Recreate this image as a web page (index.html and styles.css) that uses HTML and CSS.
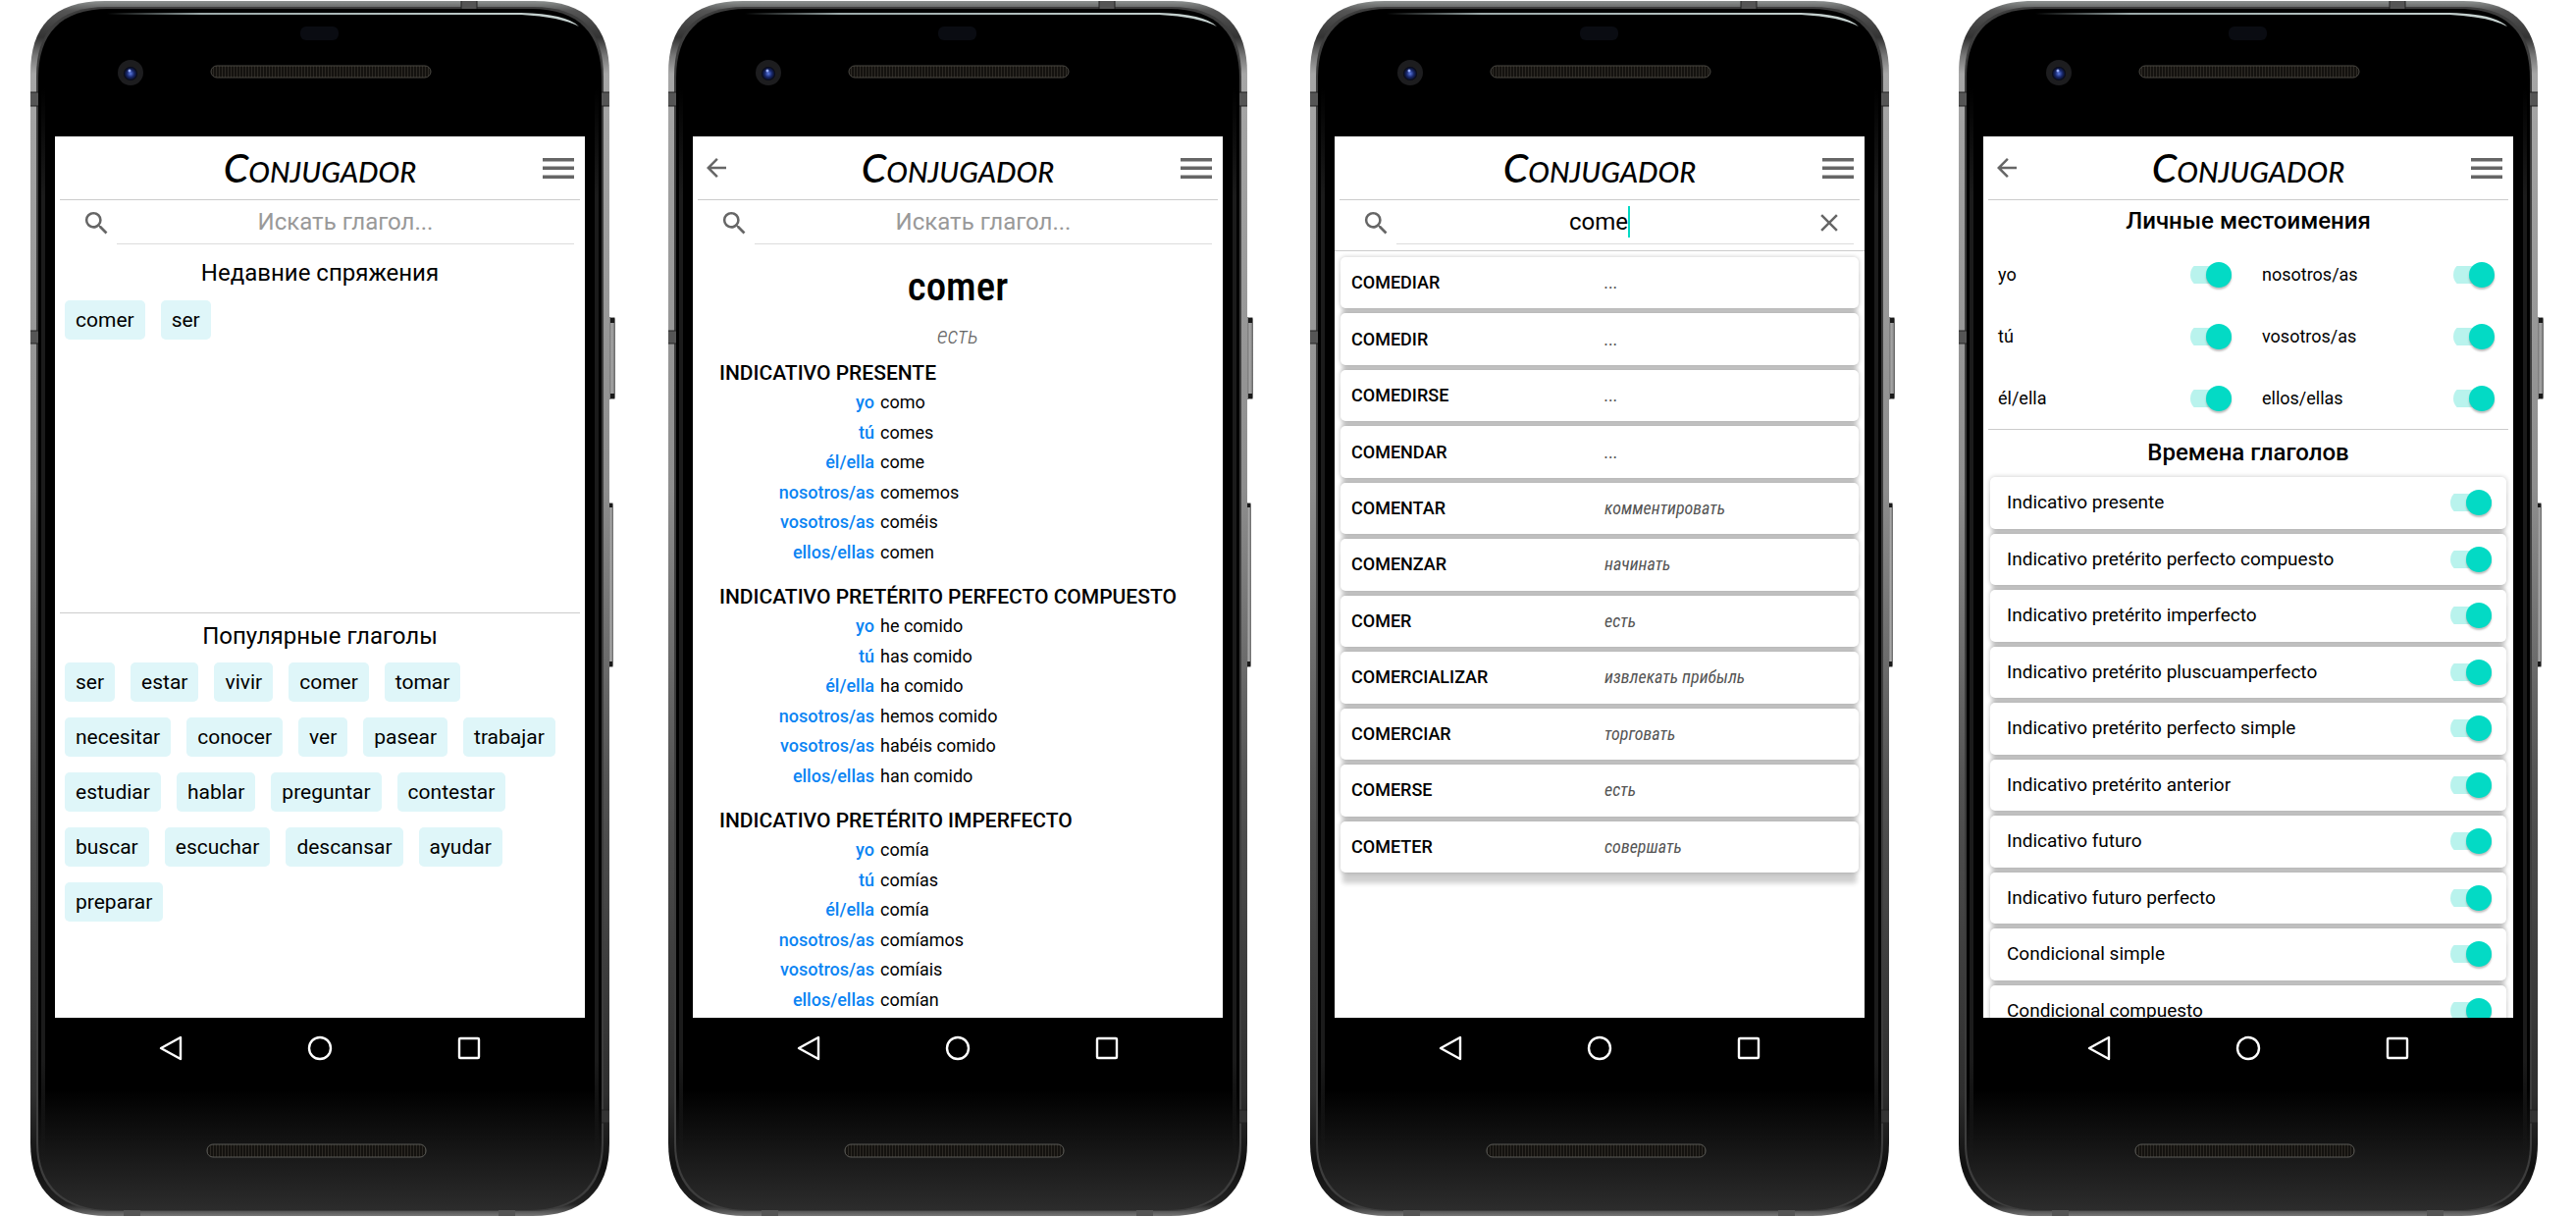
FILE: index.html
```html
<!DOCTYPE html>
<html lang="ru">
<head>
<meta charset="utf-8">
<meta name="viewport" content="width=device-width, initial-scale=1">
<title>Conjugador</title>
<link rel="stylesheet" href="styles.css">
</head>
<body>
<svg class="sprite" aria-hidden="true">
  <defs>
    <linearGradient id="metal" x1="0" y1="0" x2="0" y2="1">
      <stop offset="0" stop-color="#8d9190"/><stop offset=".008" stop-color="#555"/><stop offset=".03" stop-color="#333"/><stop offset=".045" stop-color="#777"/><stop offset=".06" stop-color="#a6a6a6"/>
      <stop offset=".4" stop-color="#8e8e8e"/><stop offset=".65" stop-color="#525252"/><stop offset=".9" stop-color="#2e2e2e"/><stop offset=".96" stop-color="#101010"/><stop offset=".99" stop-color="#222"/><stop offset="1" stop-color="#777"/>
    </linearGradient>
    <linearGradient id="glass" x1="0" y1="0" x2="0" y2="1">
      <stop offset="0" stop-color="#000"/><stop offset=".9" stop-color="#000"/><stop offset="1" stop-color="#2c2c2c"/>
    </linearGradient>
    <linearGradient id="edge" x1="0" y1="90" x2="0" y2="1190" gradientUnits="userSpaceOnUse">
      <stop offset="0" stop-color="#1b1b1b" stop-opacity="0"/><stop offset=".1" stop-color="#1b1b1b"/><stop offset=".9" stop-color="#1b1b1b"/><stop offset="1" stop-color="#1b1b1b" stop-opacity="0"/>
    </linearGradient>
    <linearGradient id="shine" x1="0" y1="0" x2="1" y2="0">
      <stop offset="0" stop-color="#9aa8a8" stop-opacity="0"/><stop offset=".2" stop-color="#9aa8a8"/><stop offset="1" stop-color="#c8d4d2"/>
    </linearGradient>
    <linearGradient id="key" x1="0" y1="0" x2="1" y2="0">
      <stop offset="0" stop-color="#555"/><stop offset=".6" stop-color="#a8a8a8"/><stop offset="1" stop-color="#666"/>
    </linearGradient>
    <pattern id="mesh" width="3" height="3" patternUnits="userSpaceOnUse">
      <rect width="3" height="3" fill="#14120f"/><rect width="1" height="3" fill="#2c2924"/>
    </pattern>
    <radialGradient id="lens"><stop offset="0" stop-color="#5a78e0"/><stop offset=".5" stop-color="#1a2a70"/><stop offset="1" stop-color="#05060f"/></radialGradient>
  </defs>
  <symbol id="frame" viewBox="0 0 600 1240">
    <rect x="588" y="323" width="8" height="84" rx="2" fill="url(#key)"/>
    <rect x="588" y="512" width="6" height="168" rx="2" fill="url(#key)"/>
    <path d="M591 324h4v5h-4zM591 401h4v5h-4zM590 513h3v4h-3zM590 674h3v5h-3z" fill="#1a1a1a"/>
    <path d="M0 75C0 28 22 1 76 1H514C567 1 590 28 590 75V1165C590 1215 560 1239 512 1239H78C30 1239 0 1215 0 1165Z" fill="url(#metal)"/>
    <path d="M6 78C6 32 28 7 78 7H512C562 7 584 32 584 78V1165C584 1211 556 1234 510 1234H80C34 1234 6 1211 6 1165Z" fill="#3d3d3d"/>
    <path d="M8 80C8 35 30 9 80 9H510C560 9 582 35 582 80V1165C582 1209 554 1233 508 1233H82C36 1233 8 1209 8 1165Z" fill="url(#glass)"/>
    <path d="M11 90h4v1100h-4zM575 90h4v1100h-4z" fill="url(#edge)"/>
    <path d="M0 94h8v14H0zM0 337h8v13H0zM582 94h8v14h-8zM439 1h16v8h-16zM95 1233h17v6H95zM477 1233h17v6h-17z" fill="#555"/>
    <path d="M582 1131h8v13h-8z" fill="#333"/>
    <path d="M0 94h8M0 108h8M0 337h8M0 350h8M582 94h8M582 108h8M582 1131h8M582 1144h8M439 1v8M455 1v8" stroke="#222" fill="none"/>
    <path d="M78 13H500Q546 14 559 27Q540 17 500 15H78Z" fill="url(#shine)"/>
    <rect x="275" y="27" width="39" height="14" rx="6" fill="#0a0c12"/>
    <circle cx="102" cy="74" r="13" fill="#1d1d1f"/><circle cx="102" cy="75" r="7" fill="url(#lens)"/><circle cx="101" cy="72" r="1.5" fill="#9bb0ff"/>
    <rect x="184" y="67" width="224" height="12" rx="6" fill="url(#mesh)" stroke="#4a4843"/>
    <rect x="180" y="1166" width="223" height="13" rx="6" fill="url(#mesh)" stroke="#5a5a56"/>
  </symbol>
  <symbol id="search" viewBox="0 0 24 24"><path fill="#666" d="M15.5 14h-.79l-.28-.27A6.471 6.471 0 0 0 16 9.5 6.5 6.5 0 1 0 9.5 16c1.61 0 3.09-.59 4.23-1.57l.27.28v.79l5 4.99L20.49 19l-4.99-5zm-6 0C7.01 14 5 11.99 5 9.5S7.01 5 9.5 5 14 7.01 14 9.5 11.99 14 9.5 14z"/></symbol>
  <symbol id="back" viewBox="0 0 24 24"><path fill="#666" d="M20 11H7.83l5.59-5.59L12 4l-8 8 8 8 1.41-1.41L7.83 13H20v-2z"/></symbol>
  <symbol id="clear" viewBox="0 0 24 24"><path fill="#666" d="M19 6.41L17.59 5 12 10.59 6.41 5 5 6.41 10.59 12 5 17.59 6.41 19 12 13.41 17.59 19 19 17.59 13.41 12z"/></symbol>
  <symbol id="menu" viewBox="0 0 32 24"><path fill="#666" d="M0 2h32v3.500H0zM0 10.500h32v3.500H0zM0 19.500h32v3.500H0z"/></symbol>
  <symbol id="nav-back" viewBox="0 0 24 26"><path d="M22 2V24L2 13Z" fill="none" stroke="#fff" stroke-width="2.4" stroke-linejoin="round"/></symbol>
  <symbol id="nav-home" viewBox="0 0 26 26"><circle cx="13" cy="13" r="11" fill="none" stroke="#fff" stroke-width="2.4"/></symbol>
  <symbol id="nav-recent" viewBox="0 0 26 26"><rect x="3" y="3" width="20" height="20" rx="1" fill="none" stroke="#fff" stroke-width="2.4"/></symbol>
</svg>

<main class="gallery">

<section class="phone">
  <svg class="frame" aria-hidden="true"><use href="#frame"/></svg>
  <div class="screen">
    <header class="bar">
      <h1 class="logo">Conjugador</h1>
      <button class="icon-btn menu" aria-label="Меню"><svg><use href="#menu"/></svg></button>
    </header>
    <div class="search">
      <svg class="glass"><use href="#search"/></svg>
      <div class="field"><input class="query" type="text" placeholder="Искать глагол..." aria-label="Искать глагол"></div>
    </div>
    <section class="recent">
      <h2 class="heading">Недавние спряжения</h2>
      <div class="chips"><button class="chip">comer</button><button class="chip">ser</button></div>
    </section>
    <section class="popular">
      <h2 class="heading">Популярные глаголы</h2>
      <div class="chips">
        <button class="chip">ser</button><button class="chip">estar</button><button class="chip">vivir</button><button class="chip">comer</button><button class="chip">tomar</button><button class="chip">necesitar</button><button class="chip">conocer</button><button class="chip">ver</button><button class="chip">pasear</button><button class="chip">trabajar</button><button class="chip">estudiar</button><button class="chip">hablar</button><button class="chip">preguntar</button><button class="chip">contestar</button><button class="chip">buscar</button><button class="chip">escuchar</button><button class="chip">descansar</button><button class="chip">ayudar</button><button class="chip">preparar</button>
      </div>
    </section>
  </div>
  <nav class="keys"><button aria-label="Назад"><svg><use href="#nav-back"/></svg></button><button aria-label="Домой"><svg><use href="#nav-home"/></svg></button><button aria-label="Обзор"><svg><use href="#nav-recent"/></svg></button></nav>
</section>

<section class="phone">
  <svg class="frame" aria-hidden="true"><use href="#frame"/></svg>
  <div class="screen">
    <header class="bar">
      <button class="icon-btn back" aria-label="Назад"><svg><use href="#back"/></svg></button>
      <h1 class="logo">Conjugador</h1>
      <button class="icon-btn menu" aria-label="Меню"><svg><use href="#menu"/></svg></button>
    </header>
    <div class="search">
      <svg class="glass"><use href="#search"/></svg>
      <div class="field"><input class="query" type="text" placeholder="Искать глагол..." aria-label="Искать глагол"></div>
    </div>
    <article class="verb">
      <h2 class="verb-name">comer</h2>
      <p class="verb-meaning">есть</p>
      <h3 class="tense">INDICATIVO PRESENTE</h3>
      <table class="forms">
        <tr><th>yo</th><td>como</td></tr>
        <tr><th>tú</th><td>comes</td></tr>
        <tr><th>él/ella</th><td>come</td></tr>
        <tr><th>nosotros/as</th><td>comemos</td></tr>
        <tr><th>vosotros/as</th><td>coméis</td></tr>
        <tr><th>ellos/ellas</th><td>comen</td></tr>
      </table>
      <h3 class="tense">INDICATIVO PRETÉRITO PERFECTO COMPUESTO</h3>
      <table class="forms">
        <tr><th>yo</th><td>he comido</td></tr>
        <tr><th>tú</th><td>has comido</td></tr>
        <tr><th>él/ella</th><td>ha comido</td></tr>
        <tr><th>nosotros/as</th><td>hemos comido</td></tr>
        <tr><th>vosotros/as</th><td>habéis comido</td></tr>
        <tr><th>ellos/ellas</th><td>han comido</td></tr>
      </table>
      <h3 class="tense">INDICATIVO PRETÉRITO IMPERFECTO</h3>
      <table class="forms">
        <tr><th>yo</th><td>comía</td></tr>
        <tr><th>tú</th><td>comías</td></tr>
        <tr><th>él/ella</th><td>comía</td></tr>
        <tr><th>nosotros/as</th><td>comíamos</td></tr>
        <tr><th>vosotros/as</th><td>comíais</td></tr>
        <tr><th>ellos/ellas</th><td>comían</td></tr>
      </table>
    </article>
  </div>
  <nav class="keys"><button aria-label="Назад"><svg><use href="#nav-back"/></svg></button><button aria-label="Домой"><svg><use href="#nav-home"/></svg></button><button aria-label="Обзор"><svg><use href="#nav-recent"/></svg></button></nav>
</section>

<section class="phone">
  <svg class="frame" aria-hidden="true"><use href="#frame"/></svg>
  <div class="screen">
    <header class="bar">
      <h1 class="logo">Conjugador</h1>
      <button class="icon-btn menu" aria-label="Меню"><svg><use href="#menu"/></svg></button>
    </header>
    <div class="search">
      <svg class="glass"><use href="#search"/></svg>
      <div class="field">
        <div class="typed"><input class="query" type="text" value="come" aria-label="Искать глагол"><span class="caret"></span></div>
        <button class="icon-btn clear" aria-label="Очистить"><svg><use href="#clear"/></svg></button>
      </div>
    </div>
    <ul class="results">
      <li class="card"><b>COMEDIAR</b><i>...</i></li>
      <li class="card"><b>COMEDIR</b><i>...</i></li>
      <li class="card"><b>COMEDIRSE</b><i>...</i></li>
      <li class="card"><b>COMENDAR</b><i>...</i></li>
      <li class="card"><b>COMENTAR</b><i>комментировать</i></li>
      <li class="card"><b>COMENZAR</b><i>начинать</i></li>
      <li class="card"><b>COMER</b><i>есть</i></li>
      <li class="card"><b>COMERCIALIZAR</b><i>извлекать прибыль</i></li>
      <li class="card"><b>COMERCIAR</b><i>торговать</i></li>
      <li class="card"><b>COMERSE</b><i>есть</i></li>
      <li class="card"><b>COMETER</b><i>совершать</i></li>
    </ul>
  </div>
  <nav class="keys"><button aria-label="Назад"><svg><use href="#nav-back"/></svg></button><button aria-label="Домой"><svg><use href="#nav-home"/></svg></button><button aria-label="Обзор"><svg><use href="#nav-recent"/></svg></button></nav>
</section>

<section class="phone">
  <svg class="frame" aria-hidden="true"><use href="#frame"/></svg>
  <div class="screen">
    <header class="bar">
      <button class="icon-btn back" aria-label="Назад"><svg><use href="#back"/></svg></button>
      <h1 class="logo">Conjugador</h1>
      <button class="icon-btn menu" aria-label="Меню"><svg><use href="#menu"/></svg></button>
    </header>
    <section class="pronouns">
      <h2 class="heading strong">Личные местоимения</h2>
      <div class="pronoun-grid">
        <label>yo<input type="checkbox" class="switch" checked></label>
        <label>nosotros/as<input type="checkbox" class="switch" checked></label>
        <label>tú<input type="checkbox" class="switch" checked></label>
        <label>vosotros/as<input type="checkbox" class="switch" checked></label>
        <label>él/ella<input type="checkbox" class="switch" checked></label>
        <label>ellos/ellas<input type="checkbox" class="switch" checked></label>
      </div>
    </section>
    <section class="tenses">
      <h2 class="heading strong">Времена глаголов</h2>
      <div class="tense-list">
        <label class="card">Indicativo presente<input type="checkbox" class="switch" checked></label>
        <label class="card">Indicativo pretérito perfecto compuesto<input type="checkbox" class="switch" checked></label>
        <label class="card">Indicativo pretérito imperfecto<input type="checkbox" class="switch" checked></label>
        <label class="card">Indicativo pretérito pluscuamperfecto<input type="checkbox" class="switch" checked></label>
        <label class="card">Indicativo pretérito perfecto simple<input type="checkbox" class="switch" checked></label>
        <label class="card">Indicativo pretérito anterior<input type="checkbox" class="switch" checked></label>
        <label class="card">Indicativo futuro<input type="checkbox" class="switch" checked></label>
        <label class="card">Indicativo futuro perfecto<input type="checkbox" class="switch" checked></label>
        <label class="card">Condicional simple<input type="checkbox" class="switch" checked></label>
        <label class="card">Condicional compuesto<input type="checkbox" class="switch" checked></label>
      </div>
    </section>
  </div>
  <nav class="keys"><button aria-label="Назад"><svg><use href="#nav-back"/></svg></button><button aria-label="Домой"><svg><use href="#nav-home"/></svg></button><button aria-label="Обзор"><svg><use href="#nav-recent"/></svg></button></nav>
</section>

</main>
</body>
</html>
```
FILE: styles.css
```css
* { box-sizing: border-box; }

body {
  margin: 0;
  background: #fff;
  color: #000;
  font: 18px/24px Roboto, "Liberation Sans", sans-serif;
}

h1, h2, h3, p, ul { margin: 0; padding: 0; }
ul { list-style: none; }

button, input {
  margin: 0;
  padding: 0;
  border: 0;
  background: none;
  color: inherit;
  font: inherit;
}

.sprite { position: absolute; width: 0; height: 0; }

.gallery {
  display: grid;
  grid-template-columns: 650fr 654fr 661fr 660fr;
  overflow: hidden;
}

/* Device */
.phone {
  position: relative;
  max-width: 590px;
  width: calc(100% - 31px);
  margin-left: 31px;
  padding: 139px 25px 0;
  min-height: 1240px;
}

.frame {
  position: absolute;
  top: 0;
  left: 0;
  width: 600px;
  height: 1240px;
}

.screen {
  position: relative;
  height: 898px;
  overflow: hidden;
  background: #fff;
}

.keys {
  position: relative;
  display: grid;
  grid-template-columns: repeat(3, 1fr);
  padding: 18px 42px;
}

.keys button { height: 26px; }
.keys svg { display: block; width: 26px; height: 26px; margin: 0 auto; }

/* App bar */
.bar {
  display: grid;
  grid-template-columns: 48px 1fr 48px;
  align-items: center;
  height: 65px;
  margin: 0 5px;
  border-bottom: 1px solid #ccc;
}

.logo {
  grid-column: 2;
  grid-row: 1;
  text-align: center;
  font: italic small-caps 500 41px/46px Lato, "Open Sans", sans-serif;
}

.icon-btn svg { display: block; width: 30px; height: 30px; }
.menu { grid-column: 3; grid-row: 1; justify-self: end; padding-right: 6px; }
.menu svg { width: 32px; height: 24px; }
.back { grid-column: 1; grid-row: 1; padding-left: 4px; }

/* Search */
.search {
  display: flex;
  align-items: center;
  height: 45px;
  padding: 0 11px 0 27px;
}

.glass { flex: none; width: 31px; height: 31px; margin: 2px 5px 0 0; }

.field {
  flex: 1;
  display: flex;
  align-items: center;
  height: 45px;
  border-bottom: 1px solid #ddd;
}

.query {
  width: 100%;
  text-align: center;
  font-size: 24px;
  line-height: 30px;
  outline: 0;
}

.query::placeholder { color: #999; opacity: 1; }

.typed { flex: 1; display: flex; justify-content: center; align-items: center; }
.typed .query { width: 60px; text-align: right; }
.caret { width: 2px; height: 32px; background: #03dac5; }
.clear { flex: none; padding: 2px 10px 0 12px; }

/* Home */
.heading {
  text-align: center;
  font-size: 24px;
  line-height: 30px;
  font-weight: 400;
}

.heading.strong { font-weight: 500; }

.recent { min-height: 376px; margin: 0 5px; padding: 14px 5px 0; border-bottom: 1px solid #ccc; }
.recent .chips { margin-top: 13px; }
.popular { padding: 8px 10px 0; }

.chips { display: flex; flex-wrap: wrap; gap: 16px; margin-top: 12px; }

.chip {
  height: 40px;
  padding: 0 11px;
  border-radius: 5px;
  background: #dff6f9;
  font-size: 21px;
}

/* Conjugation */
.verb { padding: 20px 27px 0; }

.verb-name {
  text-align: center;
  font: 500 41px/46px "Roboto Condensed", "Liberation Sans Narrow", "DejaVu Sans Condensed", sans-serif;
}

.verb-meaning {
  margin: 12px 0 8px;
  text-align: center;
  color: #666;
  font: italic 300 24px/30px "Roboto Condensed", "Liberation Sans Narrow", Roboto, sans-serif;
}

.tense { font-size: 21px; line-height: 30px; font-weight: 500; white-space: nowrap; }

.forms { width: 100%; height: 183px; margin-bottom: 15px; border-spacing: 0; table-layout: fixed; }
.forms th { width: 164px; padding: 0 6px 0 0; text-align: right; font-weight: 500; color: #0b84f3; }
.forms td { padding: 0; }

/* Cards */
.card {
  display: flex;
  align-items: center;
  border-radius: 5px;
  background: #fff;
  box-shadow: 0 0 5px rgba(0, 0, 0, .22), 0 13px 5px -2px rgba(0, 0, 0, .19);
}

.results {
  display: grid;
  grid-auto-rows: 1fr;
  gap: 5px;
  min-height: 634px;
  margin-top: 6px;
  padding: 6px 6px 0;
  border-top: 1px solid #ccc;
}

.results .card { padding: 0 11px; }
.results b { flex: 0 0 51%; font-weight: 500; }
.results i { flex: 1; color: #555; font-family: "Roboto Condensed", "Liberation Sans Narrow", Roboto, sans-serif; }

/* Settings */
.pronouns { margin: 0 5px; padding-top: 6px; border-bottom: 1px solid #ccc; }

.pronoun-grid {
  display: grid;
  grid-template-columns: 1fr 1fr;
  grid-auto-rows: 63px;
  padding: 0 10px;
  margin-top: 8px;
}

.pronoun-grid label { display: flex; align-items: center; justify-content: space-between; padding-right: 17px; }
.pronoun-grid label:nth-child(even) { padding: 0 4px 0 14px; }

.tenses { padding: 8px 7px 0; }
.tense-list { display: grid; grid-auto-rows: 1fr; gap: 5px; min-height: 570px; margin-top: 10px; font-size: 19px; }
.tense-list .card { justify-content: space-between; padding: 0 15px 0 17px; }

.switch {
  appearance: none;
  display: flex;
  align-items: center;
  justify-content: flex-end;
  width: 42px;
  height: 26px;
  background: linear-gradient(#b9f3ed, #b9f3ed) 50% 50% / 100% 18px no-repeat;
  border-radius: 13px;
}

.switch::before {
  content: "";
  width: 26px;
  height: 26px;
  border-radius: 50%;
  background: #03dac5;
  box-shadow: 0 2px 2px rgba(0, 0, 0, .25);
}
```
